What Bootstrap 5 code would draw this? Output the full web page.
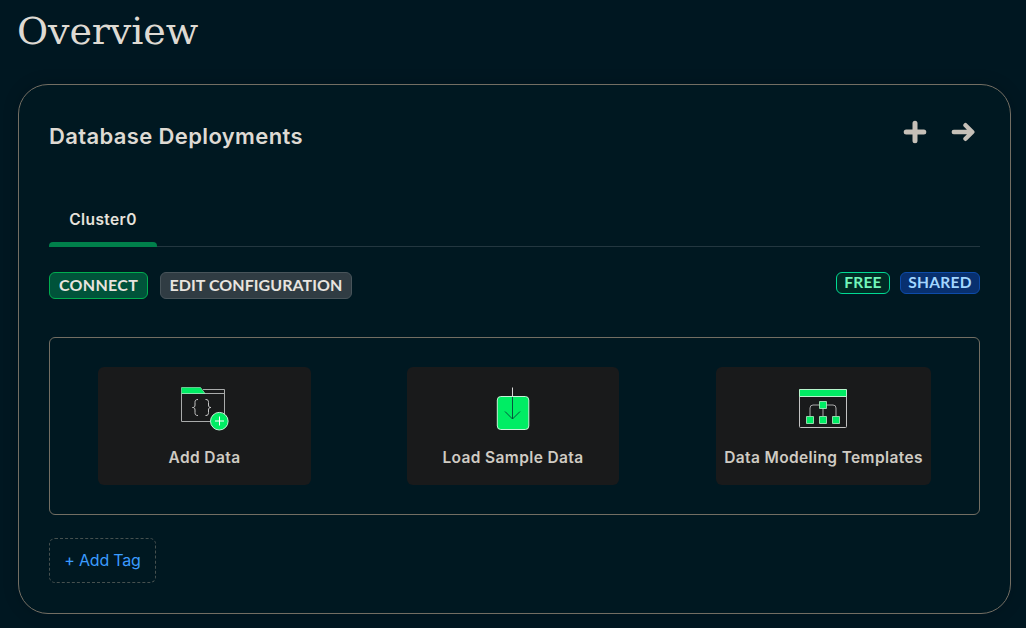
<!DOCTYPE html>
<html lang="en">
<head>
<meta charset="utf-8">
<meta name="viewport" content="width=device-width, initial-scale=1">
<title>Overview</title>
<link href="https://cdn.jsdelivr.net/npm/bootstrap@5.3.0/dist/css/bootstrap.min.css" rel="stylesheet">
<style>
  body { background: #001721; color: #dedad3; font-family: Inter, Lato, sans-serif; font-size: 16px; line-height: 20px; height: 628px; overflow: hidden; }
  .page-title { font-family: "DejaVu Serif", serif; font-size: 38px; line-height: 48px; letter-spacing: -.1px; padding: 7px 0 0 17px; height: 84px; }
  .deploy-card { margin: 0 15px 0 18px; height: 530px; padding: 0 30px; background: #001821; border: 1px solid #736e63; border-radius: 30px; box-shadow: 0 0 16px rgba(0,5,16,.18); }
  .deploy-head { padding-top: 34px; height: 117px; }
  .deploy-title { font-size: 22px; line-height: 34px; letter-spacing: .37px; font-weight: 600; }
  .head-icons { gap: 24px; margin-right: 5px; margin-top: .5px; }
  .cluster-tabs { height: 45px; border-bottom: 1px solid #233740; }
  .cluster-tab { width: 108px; height: 45px; padding-top: 8px; position: relative; color: #e6e2dc; font-size: 15.5px; font-weight: 600; letter-spacing: .4px; }
  .cluster-tab::after { content: ""; position: absolute; left: 0; right: 0; bottom: 0; height: 5px; background: #00804b; border-radius: 4px 4px 0 0; }
  .actions { padding-top: 25px; height: 90px; }
  .act { height: 27px; padding: 0 0 2px; border-radius: 6px; font-family: Lato, sans-serif; font-size: 16px; line-height: 23px; font-weight: 700; color: #e8e4df; }
  .act:hover { color: #fff; }
  .act-connect { width: 99px; background: #00533a; border: 1px solid #00ad4f; letter-spacing: .3px; }
  .act-edit { width: 192px; margin-left: 12px; background: #303c43; border: 1px solid #48545a; letter-spacing: .05px; }
  .tagpill { height: 22px; border-radius: 6px; font-family: Lato, sans-serif; font-size: 15.5px; line-height: 19px; font-weight: 700; text-align: center; letter-spacing: .25px; }
  .pill-free { width: 54px; color: #71f6ba; background: #002b25; border: 1px solid #00da93; }
  .pill-shared { width: 80px; margin-left: 10px; color: #a2d6ff; background: #08306f; border: 1px solid #0d4ba9; }
  .tiles { height: 178px; border: 1px solid #736e63; border-radius: 6px; padding: 29px 48px 0; }
  .tile { width: 213px; height: 118px; background: #191a1b; border-radius: 6px; color: #cfcbc3; padding-top: 18px; font-size: 15.5px; font-weight: 600; letter-spacing: .38px; white-space: nowrap; }
  .tile-load { width: 212px; margin-left: -1px; }
  .tile-model { width: 215px; }
  .tile svg { display: block; margin: 0 auto 13px; }
  .tile-load svg, .tile-model svg { margin-left: 81px; }
  .add-tag { width: 107px; height: 45px; margin-top: 23px; border: 1px dashed #46504f; border-radius: 6px; color: #3b9cff; font-size: 16px; line-height: 43px; letter-spacing: -.2px; text-align: center; text-decoration: none; }
</style>
</head>
<body>
<h1 class="page-title m-0 fw-normal">Overview</h1>
<main class="deploy-card">
  <header class="deploy-head d-flex justify-content-between align-items-start">
    <h2 class="deploy-title m-0">Database Deployments</h2>
    <div class="head-icons d-flex">
      <svg width="24" height="24" viewBox="0 0 24 24" fill="none" stroke="#c6c0b8" stroke-width="5" stroke-linecap="round"><path d="M12 3.200v17.600M3.200 12h17.600"/></svg>
      <svg width="24" height="24" viewBox="0 0 24 24" fill="none" stroke="#c6c0b8" stroke-width="4.400" stroke-linecap="round" stroke-linejoin="round"><path d="M2.800 12H20.500M14.500 5.200l6.800 6.800-6.800 6.800"/></svg>
    </div>
  </header>
  <nav class="cluster-tabs"><div class="cluster-tab text-center">Cluster0</div></nav>
  <div class="actions d-flex align-items-start">
    <button class="btn act act-connect">CONNECT</button>
    <button class="btn act act-edit">EDIT CONFIGURATION</button>
    <span class="tagpill pill-free ms-auto">FREE</span>
    <span class="tagpill pill-shared">SHARED</span>
  </div>
  <section class="tiles d-flex justify-content-between">
    <div class="tile text-center">
      <svg width="50" height="50" viewBox="0 0 50 50" fill="none"><path d="M23 4.500h21.500v32H1.500V8.500h43" stroke="#a9abab"/><path d="M1.500 8.500V2.500h19L25 8.500z" fill="#00ed64" stroke="#a9f5c9" stroke-width=".6"/><path d="M18 14.500c-2.500 0-3 1-3 3v2.500c0 2-1 2.500-2.500 2.500 1.500 0 2.500.5 2.500 2.500v2.500c0 2 .5 3 3 3M25.500 14.500c2.500 0 3 1 3 3V20c0 2 1 2.500 2.500 2.500-1.500 0-2.500.5-2.500 2.500v2.500c0 2-.5 3-3 3" stroke="#c7c7c7"/><circle cx="39.300" cy="36.200" r="8.800" fill="#00ed64" stroke="#c3f5d7"/><path d="M39.500 31.500v9M35 36h9" stroke="#fff"/></svg>
      Add Data</div>
    <div class="tile tile-load text-center">
      <svg width="50" height="50" viewBox="0 0 50 50" fill="none"><rect x="9.300" y="11.500" width="31.500" height="33" rx="3.500" fill="#00ed64" stroke="#c7f3d7"/><path d="M24.500 2.500v9" stroke="#d7d7d7"/><path d="M24.500 12v22M17 26.500l7.500 7.500 7.500-7.500" stroke="#07533d"/></svg>
      Load Sample Data</div>
    <div class="tile tile-model text-center">
      <svg width="50" height="50" viewBox="0 0 50 50" fill="none"><rect x="2.500" y="4.500" width="47" height="38" rx="1" stroke="#c3c3c3"/><path d="M2.500 4.500h47v7h-47z" fill="#00ed64" stroke="#b6f5cd"/><path d="M13 31v-8q0-3 3-3h20q3 0 3 3v8M26 20v11" stroke="#aaa"/><g fill="#00ed64" stroke="#b2f2c7" stroke-width=".8"><path d="M22.500 16.500h7v7h-7zM9.500 31.500h7v7h-7zM22.500 31.500h7v7h-7zM35.500 31.500h7v7h-7z"/></g></svg>
      Data Modeling Templates</div>
  </section>
  <a href="#" class="add-tag d-block">+ Add Tag</a>
</main>
<script src="https://cdn.jsdelivr.net/npm/bootstrap@5.3.0/dist/js/bootstrap.bundle.min.js"></script>
</body>
</html>
